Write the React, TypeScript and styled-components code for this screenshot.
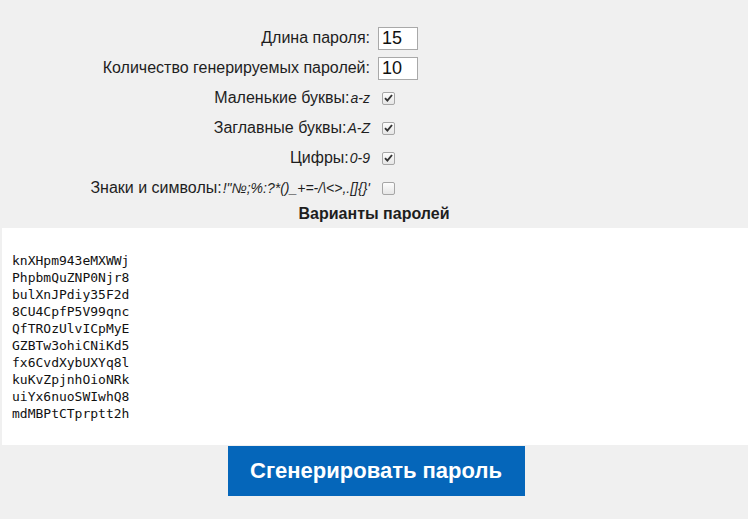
import { Fragment } from 'react'
import styled, { createGlobalStyle } from 'styled-components'

const GlobalStyle = createGlobalStyle`
  html, body {
    margin: 0;
    padding: 0;
    background-color: #f0f0f0;
    overflow: hidden;
  }
  body {
    color: #1e1e1e;
    font-family: 'Liberation Sans', Arial, sans-serif;
  }
`

const Page = styled.div`
  display: flex;
  flex-direction: column;
  padding-top: 23px;
  width: 748px;
`

const Form = styled.div`
  display: grid;
  column-gap: 8px;
  grid-auto-rows: 30px;
  grid-template-columns: 1fr 1fr;
`

const Label = styled.label`
  align-items: center;
  display: flex;
  font-size: 16px;
  justify-content: flex-end;
  white-space: nowrap;
`

const Hint = styled.i`
  font-size: 14px;
  margin-left: 1px;
`

const Cell = styled.div`
  align-items: center;
  display: flex;
`

const NumberInput = styled.input`
  background: #fff;
  border: 1px solid #a9a9a9;
  box-sizing: border-box;
  color: #111;
  font-family: 'Liberation Sans', Arial, sans-serif;
  font-size: 18px;
  height: 23px;
  outline: none;
  padding: 0 3px;
  width: 40px;
`

const Box = styled.span`
  align-items: center;
  background: linear-gradient(#fdfdfd, #e6e6e6);
  border: 1px solid #a6a6a6;
  border-radius: 2px;
  box-sizing: border-box;
  display: inline-flex;
  height: 13px;
  justify-content: center;
  margin-left: 4px;
  width: 13px;
`

const Heading = styled.div`
  font-size: 16px;
  font-weight: bold;
  line-height: 20px;
  margin-top: 1px;
  text-align: center;
`

const Output = styled.div`
  background: #fff;
  box-sizing: border-box;
  color: #111;
  font-family: 'DejaVu Sans Mono', 'Liberation Mono', monospace;
  font-size: 13px;
  height: 217px;
  line-height: 17px;
  margin: 4px 0 0 2px;
  padding: 24px 10px 0;
  white-space: pre;
`

const Submit = styled.button`
  align-self: center;
  background: #0566ba;
  border: none;
  color: #fff;
  cursor: pointer;
  font-family: 'Liberation Sans', Arial, sans-serif;
  font-size: 22px;
  font-weight: bold;
  height: 50px;
  margin: 1px 0 0 4px;
  width: 297px;
`

function Checkbox({ checked }: { checked: boolean }) {
  return (
    <Box>
      {checked && (
        <svg width="9" height="8" viewBox="0 0 9 8">
          <path d="M1 4.2 L3.4 6.6 L8 1" fill="none" stroke="#333" strokeWidth="1.9" />
        </svg>
      )}
    </Box>
  )
}

const passwords = [
  'knXHpm943eMXWWj',
  'PhpbmQuZNP0Njr8',
  'bulXnJPdiy35F2d',
  '8CU4CpfP5V99qnc',
  'QfTROzUlvICpMyE',
  'GZBTw3ohiCNiKd5',
  'fx6CvdXybUXYq8l',
  'kuKvZpjnhOioNRk',
  'uiYx6nuoSWIwhQ8',
  'mdMBPtCTprptt2h',
]

const options = [
  { label: 'Маленькие буквы:', hint: 'a-z', checked: true },
  { label: 'Заглавные буквы:', hint: 'A-Z', checked: true },
  { label: 'Цифры:', hint: '0-9', checked: true },
  { label: 'Знаки и символы:', hint: `!"№;%:?*()_+=-/\\<>,.[]{}'`, checked: false },
]

export default function App() {
  return (
    <Page>
      <GlobalStyle />
      <Form>
        <Label>Длина пароля:</Label>
        <Cell>
          <NumberInput defaultValue="15" />
        </Cell>
        <Label>Количество генерируемых паролей:</Label>
        <Cell>
          <NumberInput defaultValue="10" />
        </Cell>
        {options.map(o => (
          <Fragment key={o.label}>
            <Label>
              {o.label}
              <Hint>{o.hint}</Hint>
            </Label>
            <Cell>
              <Checkbox checked={o.checked} />
            </Cell>
          </Fragment>
        ))}
      </Form>
      <Heading>Варианты паролей</Heading>
      <Output>{passwords.join('\n')}</Output>
      <Submit>Сгенерировать пароль</Submit>
    </Page>
  )
}
